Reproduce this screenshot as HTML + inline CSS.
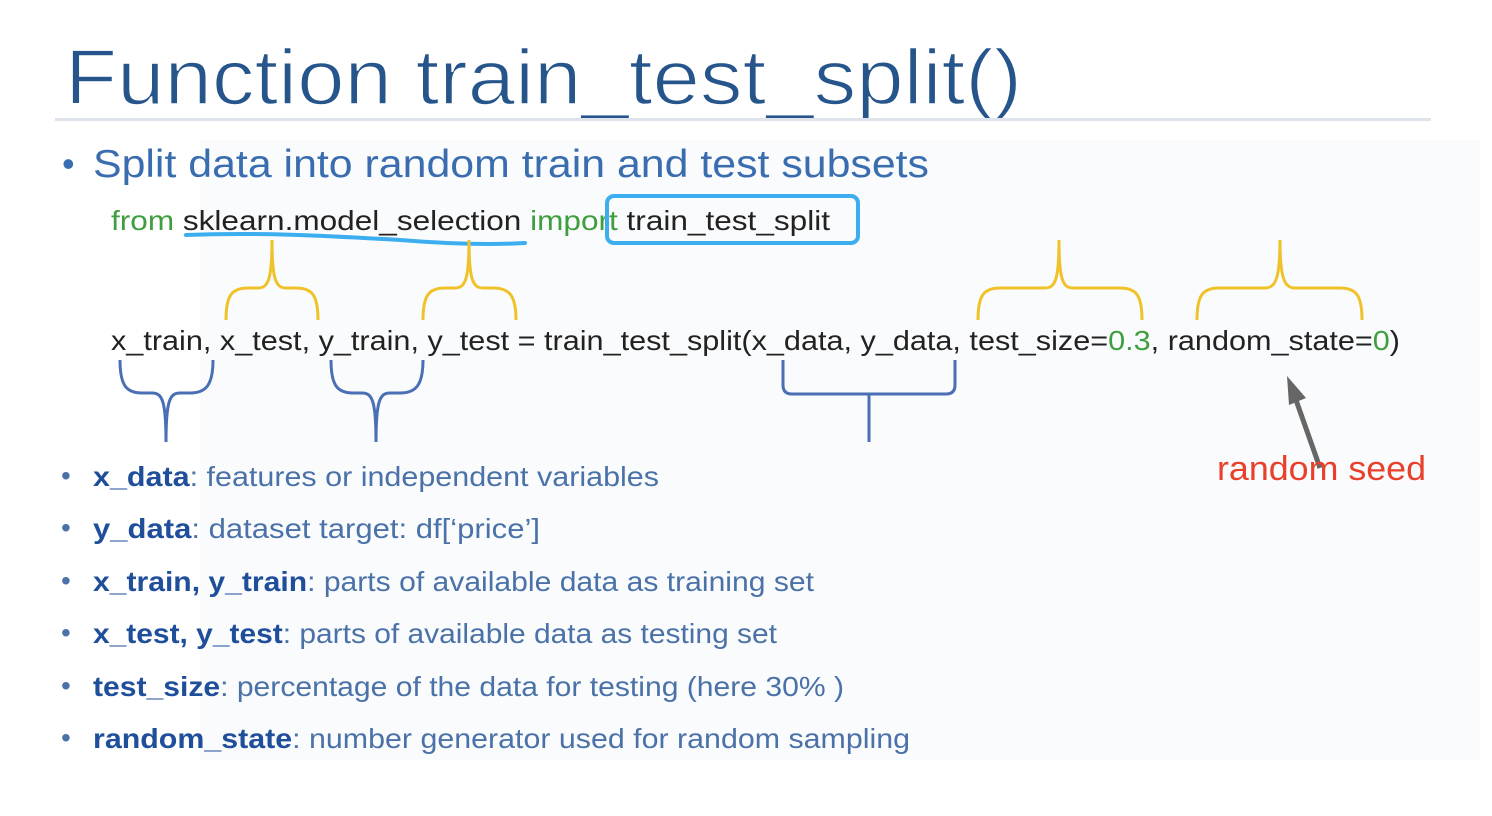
<!DOCTYPE html>
<html><head><meta charset="utf-8"><style>
html,body{margin:0;padding:0;background:#fff;width:1492px;height:816px;overflow:hidden}
svg{display:block}
text{font-family:"Liberation Sans",sans-serif}
</style></head><body>
<svg width="1492" height="816" viewBox="0 0 1492 816" xmlns="http://www.w3.org/2000/svg">
<rect width="1492" height="816" fill="#fff"/>
<rect x="200" y="140" width="1280" height="620" fill="#fafbfc"/>
<text x="65" y="104" font-size="78" fill="#25558a" stroke="#fff" stroke-width="1.6" textLength="957" lengthAdjust="spacingAndGlyphs">Function  train_test_split()</text>
<rect x="55" y="118" width="1376" height="3" fill="#dfe4ec"/>
<text x="62" y="176" font-size="36" fill="#3a6db0">•</text>
<text x="93" y="177" font-size="39" fill="#3a6db0" textLength="836" lengthAdjust="spacingAndGlyphs">Split data into random train and test subsets</text>
<text x="111" y="230" font-size="28" fill="#222" textLength="719" lengthAdjust="spacingAndGlyphs"><tspan fill="#3f9e3f">from</tspan> sklearn.model_selection <tspan fill="#3f9e3f">import</tspan> train_test_split</text>
<rect x="607" y="196" width="251" height="47" rx="7" fill="none" stroke="#3caef0" stroke-width="4"/>
<path d="M186 235 C260 232 330 236 400 240 C450 244 490 245 525 243" fill="none" stroke="#3caef0" stroke-width="4" stroke-linecap="round"/>
<text x="111" y="350" font-size="28" fill="#222" textLength="1289" lengthAdjust="spacingAndGlyphs">x_train, x_test, y_train, y_test = train_test_split(x_data, y_data, test_size=<tspan fill="#3f9e3f">0.3</tspan>, random_state=<tspan fill="#3f9e3f">0</tspan>)</text>
<g fill="none" stroke="#f0c22a" stroke-width="3">
<path d="M226 320 C226 295 232 288 248 288 L258 288 C268 288 272 280 272 240 C272 280 276 288 286 288 L296 288 C312 288 318 295 318 320"/>
<path d="M423 320 C423 295 429 288 445 288 L455 288 C465 288 469 280 469 240 C469 280 473 288 483 288 L493 288 C509 288 516 295 516 320"/>
<path d="M978 320 C978 295 984 288 1000 288 L1045 288 C1055 288 1059 280 1059 240 C1059 280 1063 288 1073 288 L1120 288 C1136 288 1142 295 1142 320"/>
<path d="M1197 320 C1197 295 1203 288 1219 288 L1265 288 C1275 288 1280 280 1280 240 C1280 280 1285 288 1295 288 L1340 288 C1356 288 1362 295 1362 320"/>
</g>
<g fill="none" stroke="#4a6fb5" stroke-width="3">
<path d="M120 360 C120 385 126 393 142 393 L152 393 C162 393 166 400 166 442 C166 400 170 393 180 393 L190 393 C206 393 213 385 213 360"/>
<path d="M331 360 C331 385 337 393 353 393 L362 393 C372 393 376 400 376 442 C376 400 380 393 390 393 L400 393 C416 393 423 385 423 360"/>
<path d="M783 360 L783 385 Q783 394 792 394 L946 394 Q955 394 955 385 L955 360 M869 394 L869 442"/>
</g>
<path d="M1320 468 L1296 400" stroke="#666" stroke-width="5"/>
<path d="M1287 376 L1306 398 L1289 405 Z" fill="#666"/>
<text x="1217" y="480" font-size="34" fill="#e8402a" textLength="209" lengthAdjust="spacingAndGlyphs">random seed</text>
<g font-size="28" fill="#4a72a8">
<text x="61" y="485" font-size="28">•</text>
<text x="93" y="486" textLength="566" lengthAdjust="spacingAndGlyphs"><tspan fill="#1f4e9a" font-weight="bold">x_data</tspan>: features or independent variables</text>
<text x="61" y="537" font-size="28">•</text>
<text x="93" y="538" textLength="447" lengthAdjust="spacingAndGlyphs"><tspan fill="#1f4e9a" font-weight="bold">y_data</tspan>: dataset target: df[‘price’]</text>
<text x="61" y="590" font-size="28">•</text>
<text x="93" y="591" textLength="721" lengthAdjust="spacingAndGlyphs"><tspan fill="#1f4e9a" font-weight="bold">x_train, y_train</tspan>: parts of available data as training set</text>
<text x="61" y="642" font-size="28">•</text>
<text x="93" y="643" textLength="684" lengthAdjust="spacingAndGlyphs"><tspan fill="#1f4e9a" font-weight="bold">x_test, y_test</tspan>: parts of available data as testing set</text>
<text x="61" y="695" font-size="28">•</text>
<text x="93" y="696" textLength="751" lengthAdjust="spacingAndGlyphs"><tspan fill="#1f4e9a" font-weight="bold">test_size</tspan>: percentage of the data for testing (here 30% )</text>
<text x="61" y="747" font-size="28">•</text>
<text x="93" y="748" textLength="817" lengthAdjust="spacingAndGlyphs"><tspan fill="#1f4e9a" font-weight="bold">random_state</tspan>: number generator used for random sampling</text>
</g>
</svg>
</body></html>
